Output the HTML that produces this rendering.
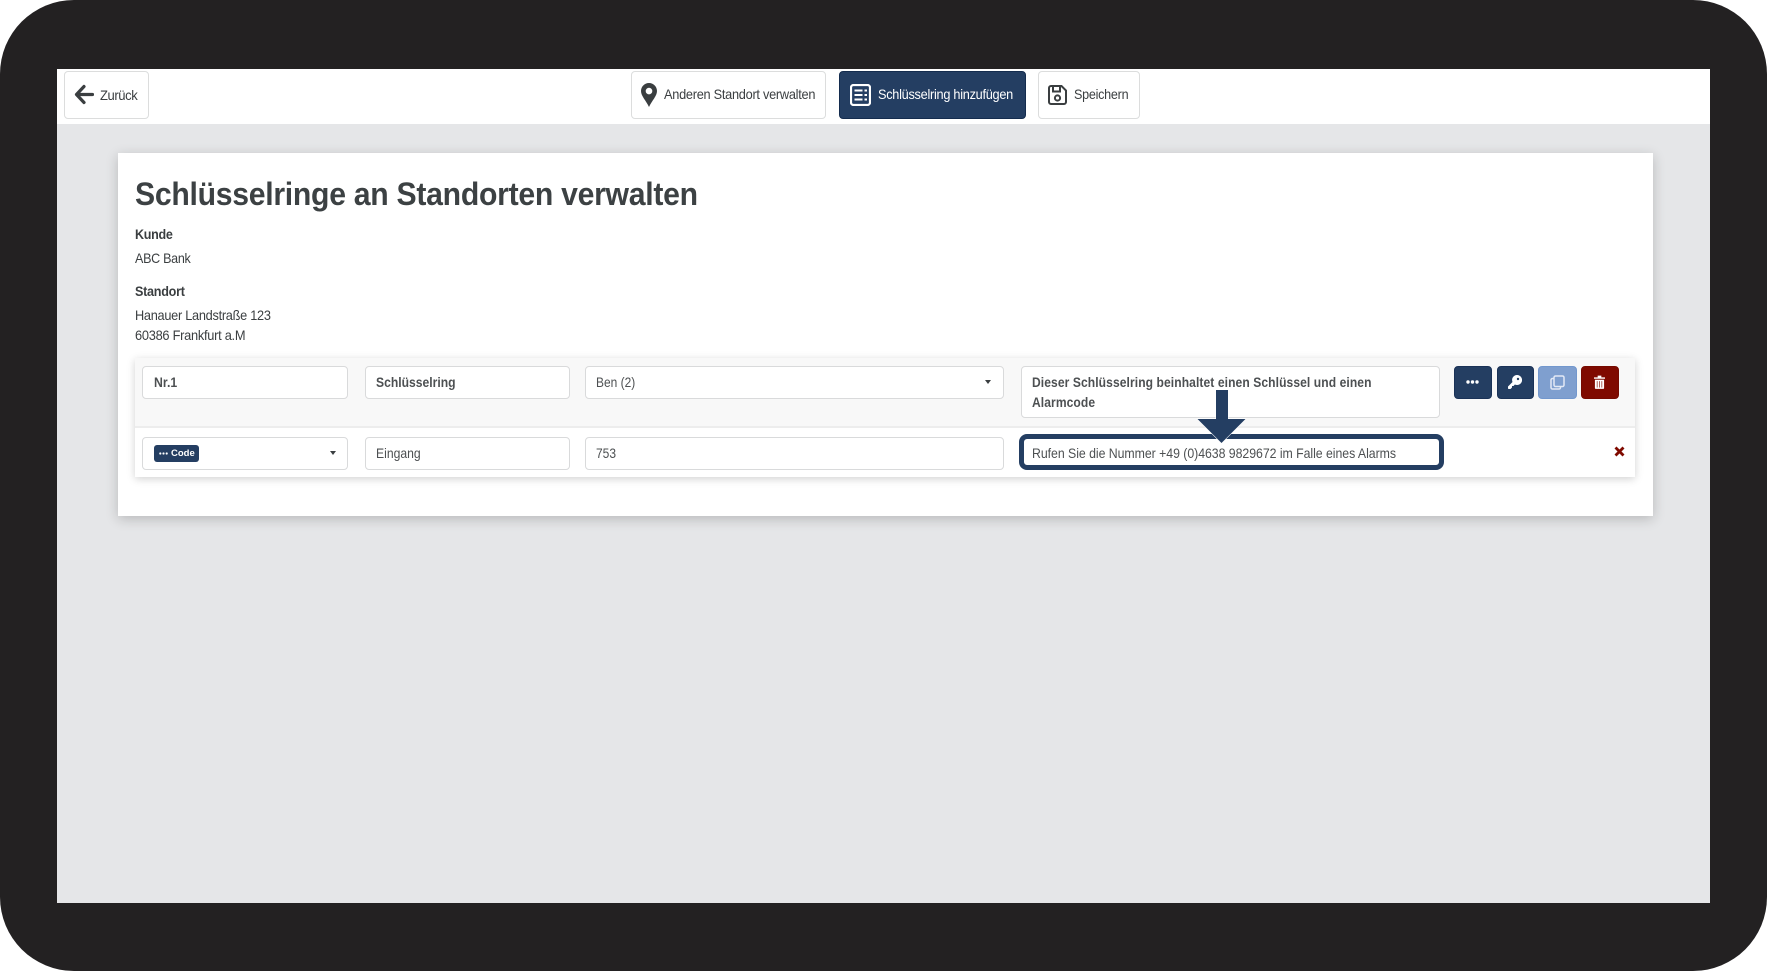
<!DOCTYPE html>
<html lang="de"><head><meta charset="utf-8"><title>Schlüsselringe an Standorten verwalten</title>
<style>
html,body{margin:0;padding:0;background:#fff}
body{width:1767px;height:971px;position:relative;overflow:hidden;font-family:"Liberation Sans",Arial,sans-serif;color:#3a3e40}
div,span,svg{position:absolute;box-sizing:border-box}
.t{white-space:nowrap;line-height:20px;height:20px;font-size:14px;transform-origin:left center;filter:blur(.3px)}
.b{font-weight:bold}
.in{background:#fff;border:1.5px solid #d9dadb;border-radius:4px}
.btn{background:#fff;border:1.5px solid #dcdddd;border-radius:4px}
.g{color:#4d5052}
.a{border-radius:4px}
</style></head><body>
<div style="left:0;top:0;width:1767px;height:971px;background:#232122;border-radius:74px"></div>
<div style="left:57px;top:69px;width:1653px;height:834px;background:#e5e6e8"></div>
<div style="left:57px;top:69px;width:1653px;height:55px;background:#fff"></div>

<div class="btn" style="left:64px;top:71px;width:85px;height:48px"></div>
<svg style="left:74px;top:84px" width="20" height="21" viewBox="0 0 20 21"><path d="M18.500 10.500H3M10 2.500L2.500 10.500L10 18.500" fill="none" stroke="#3a3e40" stroke-width="3.200" stroke-linecap="round" stroke-linejoin="round"/></svg>
<span class="t" style="left:100px;top:84.500px;letter-spacing:-.45px;transform:scaleX(.93)">Zurück</span>

<div class="btn" style="left:630.500px;top:71px;width:195.500px;height:48px"></div>
<svg style="left:641px;top:83px" width="16" height="24" viewBox="0 0 16 24"><path fill-rule="evenodd" d="M8 0C3.600 0 0 3.500 0 8c0 5 5 9.500 8 16c3-6.500 8-11 8-16C16 3.500 12.400 0 8 0zM8 4.800a3.300 3.300 0 1 1 0 6.600a3.300 3.300 0 0 1 0-6.600z" fill="#3a3e40"/></svg>
<span class="t" style="left:663.500px;top:84px;letter-spacing:-.3px;transform:scaleX(.912)">Anderen Standort verwalten</span>

<div style="left:838.500px;top:71px;width:187px;height:48px;background:#243e62;border:1px solid #142c4e;border-radius:4px"></div>
<svg style="left:850px;top:84px" width="21" height="22" viewBox="0 0 21 22"><rect x="1" y="1" width="19" height="20" rx="2.500" fill="none" stroke="#fff" stroke-width="2.200"/><path d="M4.500 6.500h8M4.500 11h8M4.500 15.500h8" stroke="#fff" stroke-width="2"/><path d="M14.500 6.500h2.500M14.500 11h2.500M14.500 15.500h2.500" stroke="#fff" stroke-width="2"/></svg>
<span class="t" style="left:878px;top:84px;color:#fff;letter-spacing:-.3px;transform:scaleX(.909)">Schlüsselring hinzufügen</span>

<div class="btn" style="left:1038px;top:71px;width:102px;height:48px"></div>
<svg style="left:1048px;top:85px" width="19" height="20" viewBox="0 0 19 20"><path d="M1 3a2 2 0 0 1 2-2h10.500L18 5.500V17a2 2 0 0 1-2 2H3a2 2 0 0 1-2-2z" fill="none" stroke="#3a3e40" stroke-width="2"/><path d="M5 1.500v5h7v-5" fill="none" stroke="#3a3e40" stroke-width="2"/><circle cx="9.500" cy="13" r="2.600" fill="none" stroke="#3a3e40" stroke-width="2"/></svg>
<span class="t" style="left:1074px;top:84px;letter-spacing:-.3px;transform:scaleX(.9)">Speichern</span>

<div style="left:118px;top:153px;width:1535px;height:363px;background:#fff;box-shadow:0 3px 12px rgba(0,0,0,.2)"></div>
<span class="t b" style="left:135px;top:175.500px;height:36px;line-height:36px;font-size:32px;letter-spacing:-.3px;color:#3c4143;transform:scaleX(.943)">Schlüsselringe an Standorten verwalten</span>
<span class="t b" style="left:135px;top:223.500px;letter-spacing:-.3px;font-size:14px;transform:scaleX(.895)">Kunde</span>
<span class="t" style="left:135px;top:248px;letter-spacing:-.3px;transform:scaleX(.893)">ABC Bank</span>
<span class="t b" style="left:135px;top:280.500px;letter-spacing:-.3px;transform:scaleX(.9)">Standort</span>
<span class="t" style="left:135px;top:305px;letter-spacing:-.3px;transform:scaleX(.91)">Hanauer Landstraße 123</span>
<span class="t" style="left:135px;top:324.500px;letter-spacing:-.3px;transform:scaleX(.916)">60386 Frankfurt a.M</span>

<div style="left:135px;top:358px;width:1500px;height:119px;background:#fff;box-shadow:0 2px 8px rgba(0,0,0,.18)"></div>
<div style="left:135px;top:358px;width:1500px;height:69.500px;background:#f8f8f8;border-bottom:2.500px solid #ededed"></div>

<div class="in" style="left:142px;top:366px;width:206px;height:33px"></div>
<span class="t b g" style="left:153.500px;top:372px;transform:scaleX(.875)">Nr.1</span>
<div class="in" style="left:365px;top:366px;width:205px;height:33px"></div>
<span class="t b g" style="left:376px;top:372px;transform:scaleX(.866)">Schlüsselring</span>
<div class="in" style="left:584.500px;top:366px;width:419px;height:33px"></div>
<span class="t g" style="left:596px;top:372px;transform:scaleX(.854)">Ben (2)</span>
<svg style="left:985px;top:380px" width="6" height="4" viewBox="0 0 6 4"><path d="M0 0h6L3 4z" fill="#3a3e40"/></svg>
<div class="in" style="left:1021px;top:366px;width:418.500px;height:52px"></div>
<span class="t b g" style="left:1032px;top:372px;letter-spacing:.1px;transform:scaleX(.862)">Dieser Schlüsselring beinhaltet einen Schlüssel und einen</span>
<span class="t b g" style="left:1032px;top:391.500px;letter-spacing:.1px;transform:scaleX(.862)">Alarmcode</span>

<div class="a" style="left:1453.500px;top:365.500px;width:38.500px;height:33.500px;background:#243e62;border:1px solid #1a3257"></div>
<svg style="left:1466px;top:380px" width="13" height="4" viewBox="0 0 13 4"><circle cx="2" cy="2" r="1.700" fill="#fff"/><circle cx="6.500" cy="2" r="1.700" fill="#fff"/><circle cx="11" cy="2" r="1.700" fill="#fff"/></svg>
<div class="a" style="left:1496.500px;top:365.500px;width:37.500px;height:33.500px;background:#243e62;border:1px solid #1a3257"></div>
<svg style="left:1508px;top:375px" width="14" height="14" viewBox="0 0 14 14"><path fill-rule="evenodd" d="M9 0a5 5 0 1 1-2.100 9.500L5.500 11H4v1.500L2.500 14H.5L0 13.500v-2L4.500 7A5 5 0 0 1 9 0zM10 2.800a1.200 1.200 0 1 0 0 2.400a1.200 1.200 0 0 0 0-2.400z" fill="#fff"/></svg>
<div class="a" style="left:1538px;top:365.500px;width:39px;height:33.500px;background:#7f9fcf;border:1px solid #7297cd"></div>
<svg style="left:1550px;top:375px" width="15" height="15" viewBox="0 0 15 15"><rect x="4" y="1" width="10" height="10.500" rx="1.500" fill="none" stroke="#e3e9f5" stroke-width="1.500"/><path d="M4 3.500H2.500A1.500 1.500 0 0 0 1 5v7.500A1.500 1.500 0 0 0 2.500 14H9a1.500 1.500 0 0 0 1.500-1.500v-1" fill="none" stroke="#e3e9f5" stroke-width="1.500"/></svg>
<div class="a" style="left:1581px;top:365.500px;width:38px;height:33.500px;background:#7f0a00;border:1px solid #750a00"></div>
<svg style="left:1594px;top:375px" width="11" height="14" viewBox="0 0 12 15"><path d="M0 2.500h12v1.500H0zM4 .5h4v2H4z" fill="#fff"/><path d="M1 5h10v9a1 1 0 0 1-1 1H2a1 1 0 0 1-1-1z" fill="#fff"/><path d="M3.500 6.500v7M6 6.500v7M8.500 6.500v7" stroke="#a85a50" stroke-width="1"/></svg>

<div class="in" style="left:142px;top:437px;width:206px;height:33px"></div>
<div style="left:154px;top:445px;width:45px;height:17px;background:#243e62;border-radius:3px"></div>
<svg style="left:159px;top:452px" width="9" height="3" viewBox="0 0 9 3"><circle cx="1.300" cy="1.500" r="1.100" fill="#fff"/><circle cx="4.500" cy="1.500" r="1.100" fill="#fff"/><circle cx="7.700" cy="1.500" r="1.100" fill="#fff"/></svg>
<span class="t b" style="left:171px;top:444px;font-size:9.500px;color:#fff">Code</span>
<svg style="left:330px;top:451px" width="6" height="4" viewBox="0 0 6 4"><path d="M0 0h6L3 4z" fill="#3a3e40"/></svg>
<div class="in" style="left:365px;top:437px;width:205px;height:33px"></div>
<span class="t g" style="left:376px;top:443px;transform:scaleX(.87)">Eingang</span>
<div class="in" style="left:584.500px;top:437px;width:419px;height:33px"></div>
<span class="t g" style="left:596px;top:443px;transform:scaleX(.857)">753</span>
<div style="left:1019px;top:434px;width:425px;height:35.500px;background:#fff;border:5px solid #243e62;border-radius:8px"></div>
<span class="t g" style="left:1032px;top:443px;letter-spacing:-.05px;transform:scaleX(.88)">Rufen Sie die Nummer +49 (0)4638 9829672 im Falle eines Alarms</span>
<svg style="left:1195px;top:388px" width="53" height="58" viewBox="0 0 53 58"><path d="M21 2h12v29h17.500L26.500 55L2.500 31H21z" fill="#243e62" stroke="#fff" stroke-width="1" stroke-linejoin="round" paint-order="stroke"/></svg>
<svg style="left:1614px;top:446px" width="11" height="11" viewBox="0 0 11 11"><path d="M1.500 1.500l8 8M9.500 1.500l-8 8" stroke="#7f0a00" stroke-width="2.800"/></svg>
</body></html>
